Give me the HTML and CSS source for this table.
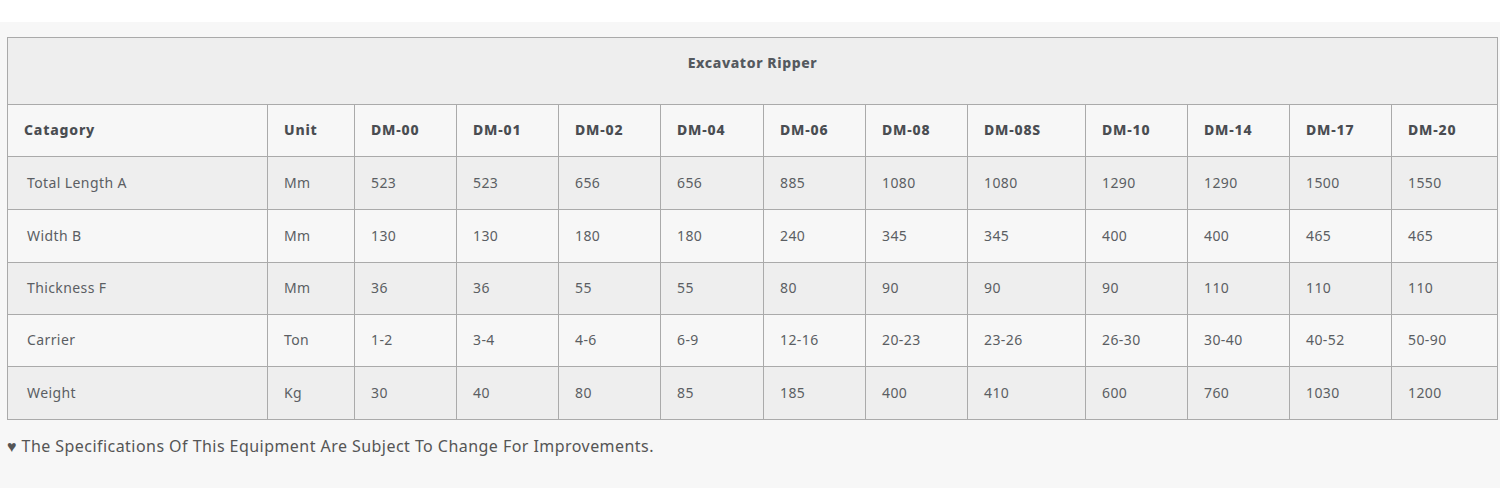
FILE: index.html
```html
<!DOCTYPE html>
<html>
<head>
<meta charset="utf-8">
<link rel="stylesheet" href="styles.css">
</head>
<body>
<div class="topband"></div>
<section class="spec">
  <table class="spec-table">
    <colgroup>
      <col style="width:260px"><col style="width:87px"><col style="width:102px"><col style="width:102px"><col style="width:102px"><col style="width:103px"><col style="width:102px"><col style="width:102px"><col style="width:118px"><col style="width:102px"><col style="width:102px"><col style="width:102px"><col style="width:106px">
    </colgroup>
    <tr class="title-row"><th colspan="13">Excavator Ripper</th></tr>
    <tr class="head-row">
      <th>Catagory</th><th>Unit</th><th>DM-00</th><th>DM-01</th><th>DM-02</th><th>DM-04</th><th>DM-06</th><th>DM-08</th><th>DM-08S</th><th>DM-10</th><th>DM-14</th><th>DM-17</th><th>DM-20</th>
    </tr>
    <tr class="row odd tall">
      <td class="first">Total Length A</td><td>Mm</td><td>523</td><td>523</td><td>656</td><td>656</td><td>885</td><td>1080</td><td>1080</td><td>1290</td><td>1290</td><td>1500</td><td>1550</td>
    </tr>
    <tr class="row even tall">
      <td class="first">Width B</td><td>Mm</td><td>130</td><td>130</td><td>180</td><td>180</td><td>240</td><td>345</td><td>345</td><td>400</td><td>400</td><td>465</td><td>465</td>
    </tr>
    <tr class="row odd">
      <td class="first">Thickness F</td><td>Mm</td><td>36</td><td>36</td><td>55</td><td>55</td><td>80</td><td>90</td><td>90</td><td>90</td><td>110</td><td>110</td><td>110</td>
    </tr>
    <tr class="row even">
      <td class="first">Carrier</td><td>Ton</td><td>1-2</td><td>3-4</td><td>4-6</td><td>6-9</td><td>12-16</td><td>20-23</td><td>23-26</td><td>26-30</td><td>30-40</td><td>40-52</td><td>50-90</td>
    </tr>
    <tr class="row odd tall">
      <td class="first">Weight</td><td>Kg</td><td>30</td><td>40</td><td>80</td><td>85</td><td>185</td><td>400</td><td>410</td><td>600</td><td>760</td><td>1030</td><td>1200</td>
    </tr>
  </table>
  <p class="note">♥ The Specifications Of This Equipment Are Subject To Change For Improvements.</p>
</section>
</body>
</html>
```

FILE: styles.css
```css
html, body {
  margin: 0;
  padding: 0;
  background: #f7f7f7;
  font-family: "Noto Sans", "Open Sans", sans-serif;
  color: #555;
}
.topband {
  height: 22px;
  background: #ffffff;
}
.spec {
  padding: 15px 2px 0 7px;
  height: 451px;
  box-sizing: border-box;
}
.spec-table {
  border-collapse: collapse;
  table-layout: fixed;
  width: 1491px;
  font-size: 14px;
}
.spec-table th, .spec-table td {
  border: 1px solid #aaaaaa;
  text-align: left;
  padding: 0 16px 2px 16px;
  vertical-align: middle;
  box-sizing: border-box;
}
.title-row th {
  height: 67px;
  background: #eeeeee;
  text-align: center;
  font-weight: 800;
  color: #54595f;
  font-size: 14px;
  letter-spacing: 0.6px;
  padding-bottom: 18px;
}
.head-row th {
  height: 52px;
  background: #f7f7f7;
  font-weight: 800;
  color: #4a4d52;
  letter-spacing: 0.8px;
}
.row td {
  height: 52px;
  color: #5b5e63;
  letter-spacing: 0.4px;
}
.row.tall td {
  height: 53px;
}
.row td.first {
  padding-left: 19px;
}
.odd td { background: #eeeeee; }
.even td { background: #f7f7f7; }
.note {
  margin: 15px 0 0 0;
  font-size: 16px;
  color: #555;
  line-height: 22px;
  letter-spacing: 0.45px;
}
```
